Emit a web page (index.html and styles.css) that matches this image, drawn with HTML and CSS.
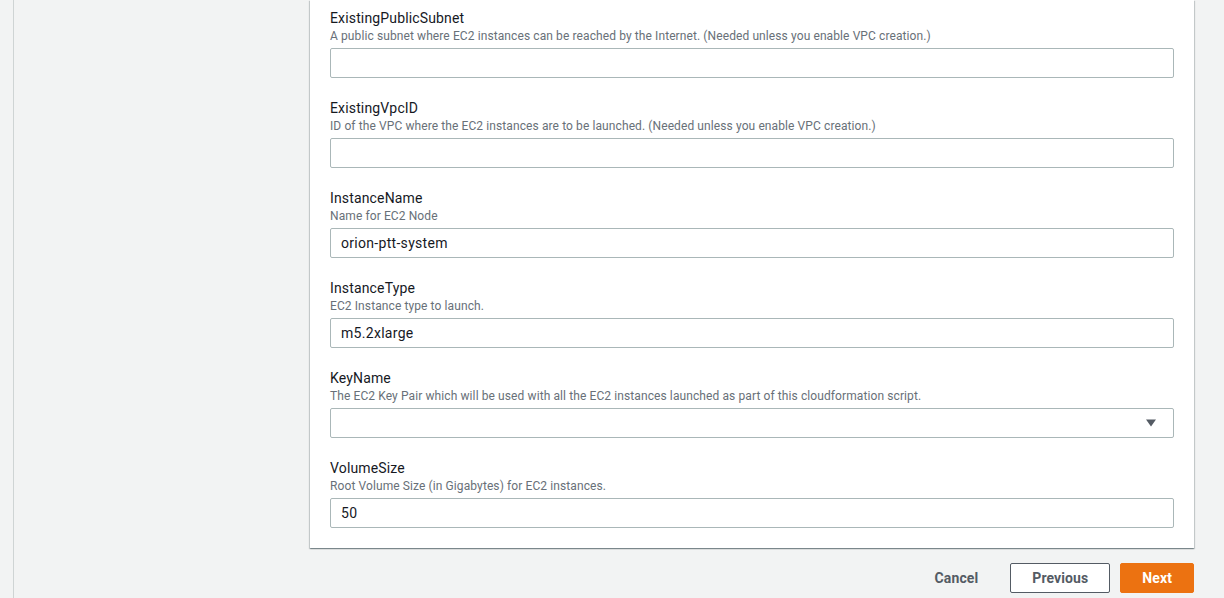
FILE: index.html
```html
<!DOCTYPE html>
<html lang="en">
<head>
<meta charset="utf-8">
<title>Specify stack details</title>
<link rel="stylesheet" href="styles.css">
</head>
<body>
<div class="page">
  <div class="rail"></div>
  <main class="main">
    <section class="panel">
      <div class="field">
        <label class="label">ExistingPublicSubnet</label>
        <div class="desc">A public subnet where EC2 instances can be reached by the Internet. (Needed unless you enable VPC creation.)</div>
        <div class="input"></div>
      </div>
      <div class="field">
        <label class="label">ExistingVpcID</label>
        <div class="desc">ID of the VPC where the EC2 instances are to be launched. (Needed unless you enable VPC creation.)</div>
        <div class="input"></div>
      </div>
      <div class="field">
        <label class="label">InstanceName</label>
        <div class="desc">Name for EC2 Node</div>
        <div class="input">orion-ptt-system</div>
      </div>
      <div class="field">
        <label class="label">InstanceType</label>
        <div class="desc">EC2 Instance type to launch.</div>
        <div class="input">m5.2xlarge</div>
      </div>
      <div class="field">
        <label class="label">KeyName</label>
        <div class="desc">The EC2 Key Pair which will be used with all the EC2 instances launched as part of this cloudformation script.</div>
        <div class="input select">
          <span class="value"></span>
          <svg class="caret" width="10" height="8" viewBox="0 0 10 8" aria-hidden="true"><path d="M0 0.5 H10 L5 7.5 Z" fill="#545b64"/></svg>
        </div>
      </div>
      <div class="field">
        <label class="label">VolumeSize</label>
        <div class="desc">Root Volume Size (in Gigabytes) for EC2 instances.</div>
        <div class="input">50</div>
      </div>
    </section>
    <div class="actions">
      <button class="btn btn-link">Cancel</button>
      <button class="btn btn-normal">Previous</button>
      <button class="btn btn-primary">Next</button>
    </div>
  </main>
</div>
</body>
</html>
```
FILE: styles.css
```css
html, body {
  margin: 0;
  padding: 0;
  background: #f2f3f3;
  font-family: Roboto, "Liberation Sans", sans-serif;
  color: #16191f;
}

.page {
  display: flex;
  min-height: 598px;
}

.rail {
  width: 13px;
  flex: none;
  border-right: 1px solid #cfd4d4;
}

.main {
  flex: 1;
  padding: 0 30px 0 296px;
}

.panel {
  background: #ffffff;
  padding: 8px 20px 20px 20px;
  display: flex;
  flex-direction: column;
  gap: 20px;
  box-shadow: 0 1px 1px 0 rgba(0, 28, 36, 0.3), 1px 1px 1px 0 rgba(0, 28, 36, 0.15), -1px 1px 1px 0 rgba(0, 28, 36, 0.15);
}

.field {
  display: flex;
  flex-direction: column;
}

.label {
  font-size: 14px;
  line-height: 20px;
  letter-spacing: 0.15px;
  color: #16191f;
}

.desc {
  font-size: 12px;
  line-height: 16px;
  letter-spacing: 0.1px;
  color: #687078;
}

.input {
  margin-top: 4px;
  height: 30px;
  box-sizing: border-box;
  border: 1px solid #aab7b8;
  border-radius: 2px;
  padding: 0 10px;
  font-size: 14px;
  line-height: 28px;
  letter-spacing: 0.3px;
  color: #16191f;
  background: #ffffff;
}

.select {
  display: flex;
  align-items: center;
  justify-content: space-between;
  padding-right: 17px;
}

.caret {
  display: block;
}

.actions {
  display: flex;
  justify-content: flex-end;
  align-items: center;
  gap: 10px;
  margin-top: 15px;
}

.btn {
  height: 30px;
  box-sizing: border-box;
  padding: 0 21px;
  border-radius: 2px;
  font-family: Roboto, "Liberation Sans", sans-serif;
  font-size: 14px;
  font-weight: 700;
  letter-spacing: 0.1px;
  line-height: 28px;
  cursor: pointer;
}

.btn-link {
  background: transparent;
  border: 1px solid transparent;
  color: #545b64;
}

.btn-normal {
  background: #ffffff;
  border: 1px solid #545b64;
  color: #545b64;
}

.btn-primary {
  background: #ec7211;
  border: 1px solid #ec7211;
  color: #ffffff;
}
```
